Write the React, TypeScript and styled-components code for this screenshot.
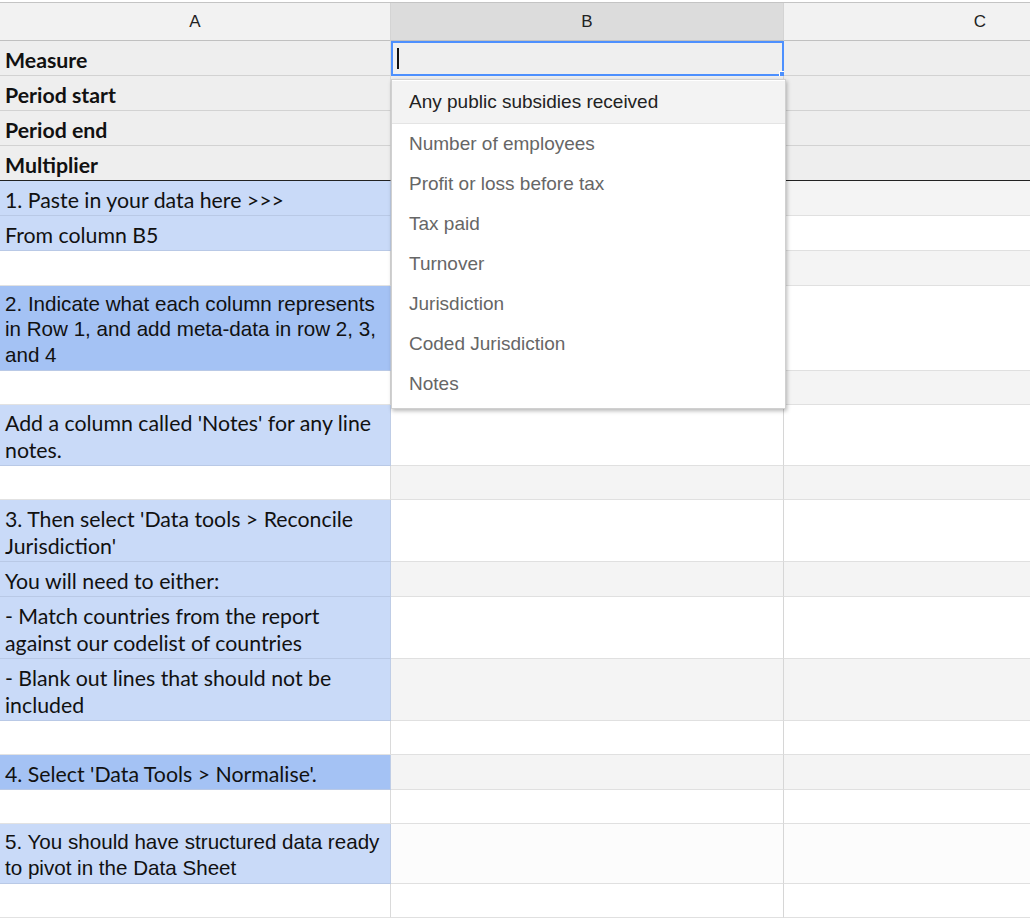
import * as React from 'react';
import styled, { createGlobalStyle, css } from 'styled-components';

const GlobalStyle = createGlobalStyle`
    html, body { margin: 0; padding: 0; background: #ffffff; }
    body { width: 1030px; height: 918px; overflow: hidden; }
`;

const CALIBRI = `Lato, "Open Sans", "Liberation Sans", sans-serif`;
const ARIAL = `"Liberation Sans", Arial, Helvetica, sans-serif`;

// column C runs on past the right edge of the window
const COLS = '391px 393px 393px';

type Fill = 'frozen' | 'light' | 'dark' | 'white';

const fills: {[key in Fill]: string} = {
    frozen: '#eeeeee',
    light: '#c9daf8',
    dark: '#a4c2f4',
    white: '#ffffff',
};

const Viewport = styled.div`
    width: 1030px;
    height: 918px;
    overflow: hidden;
`;

const Sheet = styled.div`
    position: relative;
    width: 1177px;
    padding-top: 2px;
`;

const HeaderRow = styled.div`
    display: grid;
    grid-template-columns: ${COLS};
    height: 39px;
    border-top: 1px solid #c4c4c4;
    box-sizing: border-box;
`;

const HeaderCell = styled.div<{$active?: boolean}>`
    display: flex;
    align-items: center;
    justify-content: center;
    font-family: ${ARIAL};
    font-size: 17px;
    color: #222;
    background: ${p => p.$active ? '#dcdcdc' : '#f2f2f2'};
    border-right: 1px solid #d4d4d4;
    border-bottom: 1px solid #c0c0c0;
    padding-top: 1px;
`;

const Row = styled.div<{$h: number}>`
    display: grid;
    grid-template-columns: ${COLS};
    height: ${p => p.$h}px;
`;

const Cell = styled.div<{$fill: Fill, $edge?: boolean, $font?: 'calibri' | 'arial', $bold?: boolean}>`
    position: relative;
    display: flex;
    align-items: flex-end;
    box-sizing: border-box;
    padding: 0 6px ${p => p.$font === 'arial' ? '3px' : '1px'} 5px;
    background: ${p => fills[p.$fill]};
    border-right: 1px solid ${p => p.$fill === 'white' || p.$fill === 'frozen' ? '#dadada' : '#bfcde6'};
    border-bottom: 1px solid ${p => p.$fill === 'frozen' ? '#d2d2d2' : p.$fill === 'white' ? '#e2e2e2' : '#b9c9e6'};
    color: #111;
    font-family: ${p => p.$font === 'arial' ? ARIAL : CALIBRI};
    font-size: ${p => p.$font === 'arial' ? '20.6px' : '21.3px'};
    line-height: ${p => p.$font === 'arial' ? '25.5px' : '27px'};
    font-weight: ${p => p.$bold ? 700 : 400};
    ${p => p.$edge && css`border-bottom: 1px solid #222;`}
`;

const BlankCell = styled.div<{$shade: 'frozen' | 'band' | 'plain' | 'faint', $edge?: boolean}>`
    position: relative;
    box-sizing: border-box;
    background: ${p => p.$shade === 'frozen' ? '#eeeeee' : p.$shade === 'band' ? '#f4f4f4' : p.$shade === 'faint' ? '#fcfcfc' : '#ffffff'};
    border-right: 1px solid #d6d6d6;
    border-bottom: 1px solid ${p => p.$shade === 'frozen' ? '#d2d2d2' : '#e0e0e0'};
    ${p => p.$edge && css`border-bottom: 1px solid #222;`}
`;

const ActiveFrame = styled.div`
    position: absolute;
    top: 0;
    left: 0;
    right: -1px;
    bottom: -1px;
    border: 2px solid #4d90fe;
    background: #efefef;
`;

const Caret = styled.div`
    position: absolute;
    left: 4px;
    top: 5px;
    width: 1.5px;
    height: 21px;
    background: #111;
`;

const Handle = styled.div`
    position: absolute;
    right: -4px;
    bottom: -4px;
    width: 6px;
    height: 6px;
    background: #4d90fe;
    border-left: 1px solid #fff;
    border-top: 1px solid #fff;
`;

const Dropdown = styled.div`
    position: absolute;
    left: 391px;
    top: 79px;
    width: 395px;
    box-sizing: border-box;
    background: #ffffff;
    border: 1px solid #d0d0d0;
    box-shadow: 1px 2px 4px rgba(0, 0, 0, 0.28);
    padding-top: 1px;
    padding-bottom: 4px;
    z-index: 2;
`;

const Option = styled.div<{$first?: boolean}>`
    display: flex;
    align-items: center;
    height: ${p => p.$first ? 42 : 40}px;
    padding-left: 17px;
    font-family: ${ARIAL};
    font-size: 19px;
    color: ${p => p.$first ? '#222' : '#666'};
    background: ${p => p.$first ? '#f3f3f3' : 'transparent'};
    ${p => p.$first && css`
        border-bottom: 1px solid #e4e4e4;
    `}
`;

type RowSpec = {
    h: number,
    text?: string,
    fill: Fill,
    font?: 'calibri' | 'arial',
    bold?: boolean,
    band?: 'frozen' | 'band' | 'plain' | 'faint',
};

const rows: Array<RowSpec> = [
    {h: 35, text: 'Measure', fill: 'frozen', bold: true, band: 'frozen'},
    {h: 35, text: 'Period start', fill: 'frozen', bold: true, band: 'frozen'},
    {h: 35, text: 'Period end', fill: 'frozen', bold: true, band: 'frozen'},
    {h: 35, text: 'Multiplier', fill: 'frozen', bold: true, band: 'frozen'},
    {h: 35, text: '1. Paste in your data here >>>', fill: 'light', band: 'band'},
    {h: 35, text: 'From column B5', fill: 'light', band: 'plain'},
    {h: 35, fill: 'white', band: 'band'},
    {h: 85, text: '2. Indicate what each column represents in Row 1, and add meta-data in row 2, 3, and 4', fill: 'dark', font: 'arial', band: 'plain'},
    {h: 34, fill: 'white', band: 'band'},
    {h: 61, text: "Add a column called 'Notes' for any line notes.", fill: 'light', band: 'plain'},
    {h: 34, fill: 'white', band: 'band'},
    {h: 62, text: "3. Then select 'Data tools > Reconcile Jurisdiction'", fill: 'light', band: 'plain'},
    {h: 35, text: 'You will need to either:', fill: 'light', band: 'band'},
    {h: 62, text: '- Match countries from the report against our codelist of countries', fill: 'light', band: 'plain'},
    {h: 62, text: '- Blank out lines that should not be included', fill: 'light', band: 'band'},
    {h: 34, fill: 'white', band: 'plain'},
    {h: 35, text: "4. Select 'Data Tools > Normalise'.", fill: 'dark', band: 'band'},
    {h: 34, fill: 'white', band: 'plain'},
    {h: 60, text: '5. You should have structured data ready to pivot in the Data Sheet', fill: 'light', font: 'arial', band: 'faint'},
    {h: 34, fill: 'white', band: 'plain'},
];

const options = [
    'Any public subsidies received',
    'Number of employees',
    'Profit or loss before tax',
    'Tax paid',
    'Turnover',
    'Jurisdiction',
    'Coded Jurisdiction',
    'Notes',
];

const App: React.FC = () => {
    return (
        <Viewport>
            <GlobalStyle/>
            <Sheet>
                <HeaderRow>
                    <HeaderCell>A</HeaderCell>
                    <HeaderCell $active>B</HeaderCell>
                    <HeaderCell>C</HeaderCell>
                </HeaderRow>
                {rows.map((row, i) => {
                    const edge = i === 3;
                    return (
                        <Row key={i} $h={row.h}>
                            <Cell $fill={row.fill} $font={row.font} $bold={row.bold} $edge={edge}>
                                <span>{row.text || ''}</span>
                            </Cell>
                            <BlankCell $shade={row.band || 'plain'} $edge={edge}>
                                {i === 0 ? (
                                    <ActiveFrame>
                                        <Caret/>
                                        <Handle/>
                                    </ActiveFrame>
                                ) : ''}
                            </BlankCell>
                            <BlankCell $shade={row.band || 'plain'} $edge={edge}/>
                        </Row>
                    );
                })}
                <Dropdown>
                    {options.map((opt, i) => <Option key={opt} $first={i === 0}>{opt}</Option>)}
                </Dropdown>
            </Sheet>
        </Viewport>
    );
};

export default App;
